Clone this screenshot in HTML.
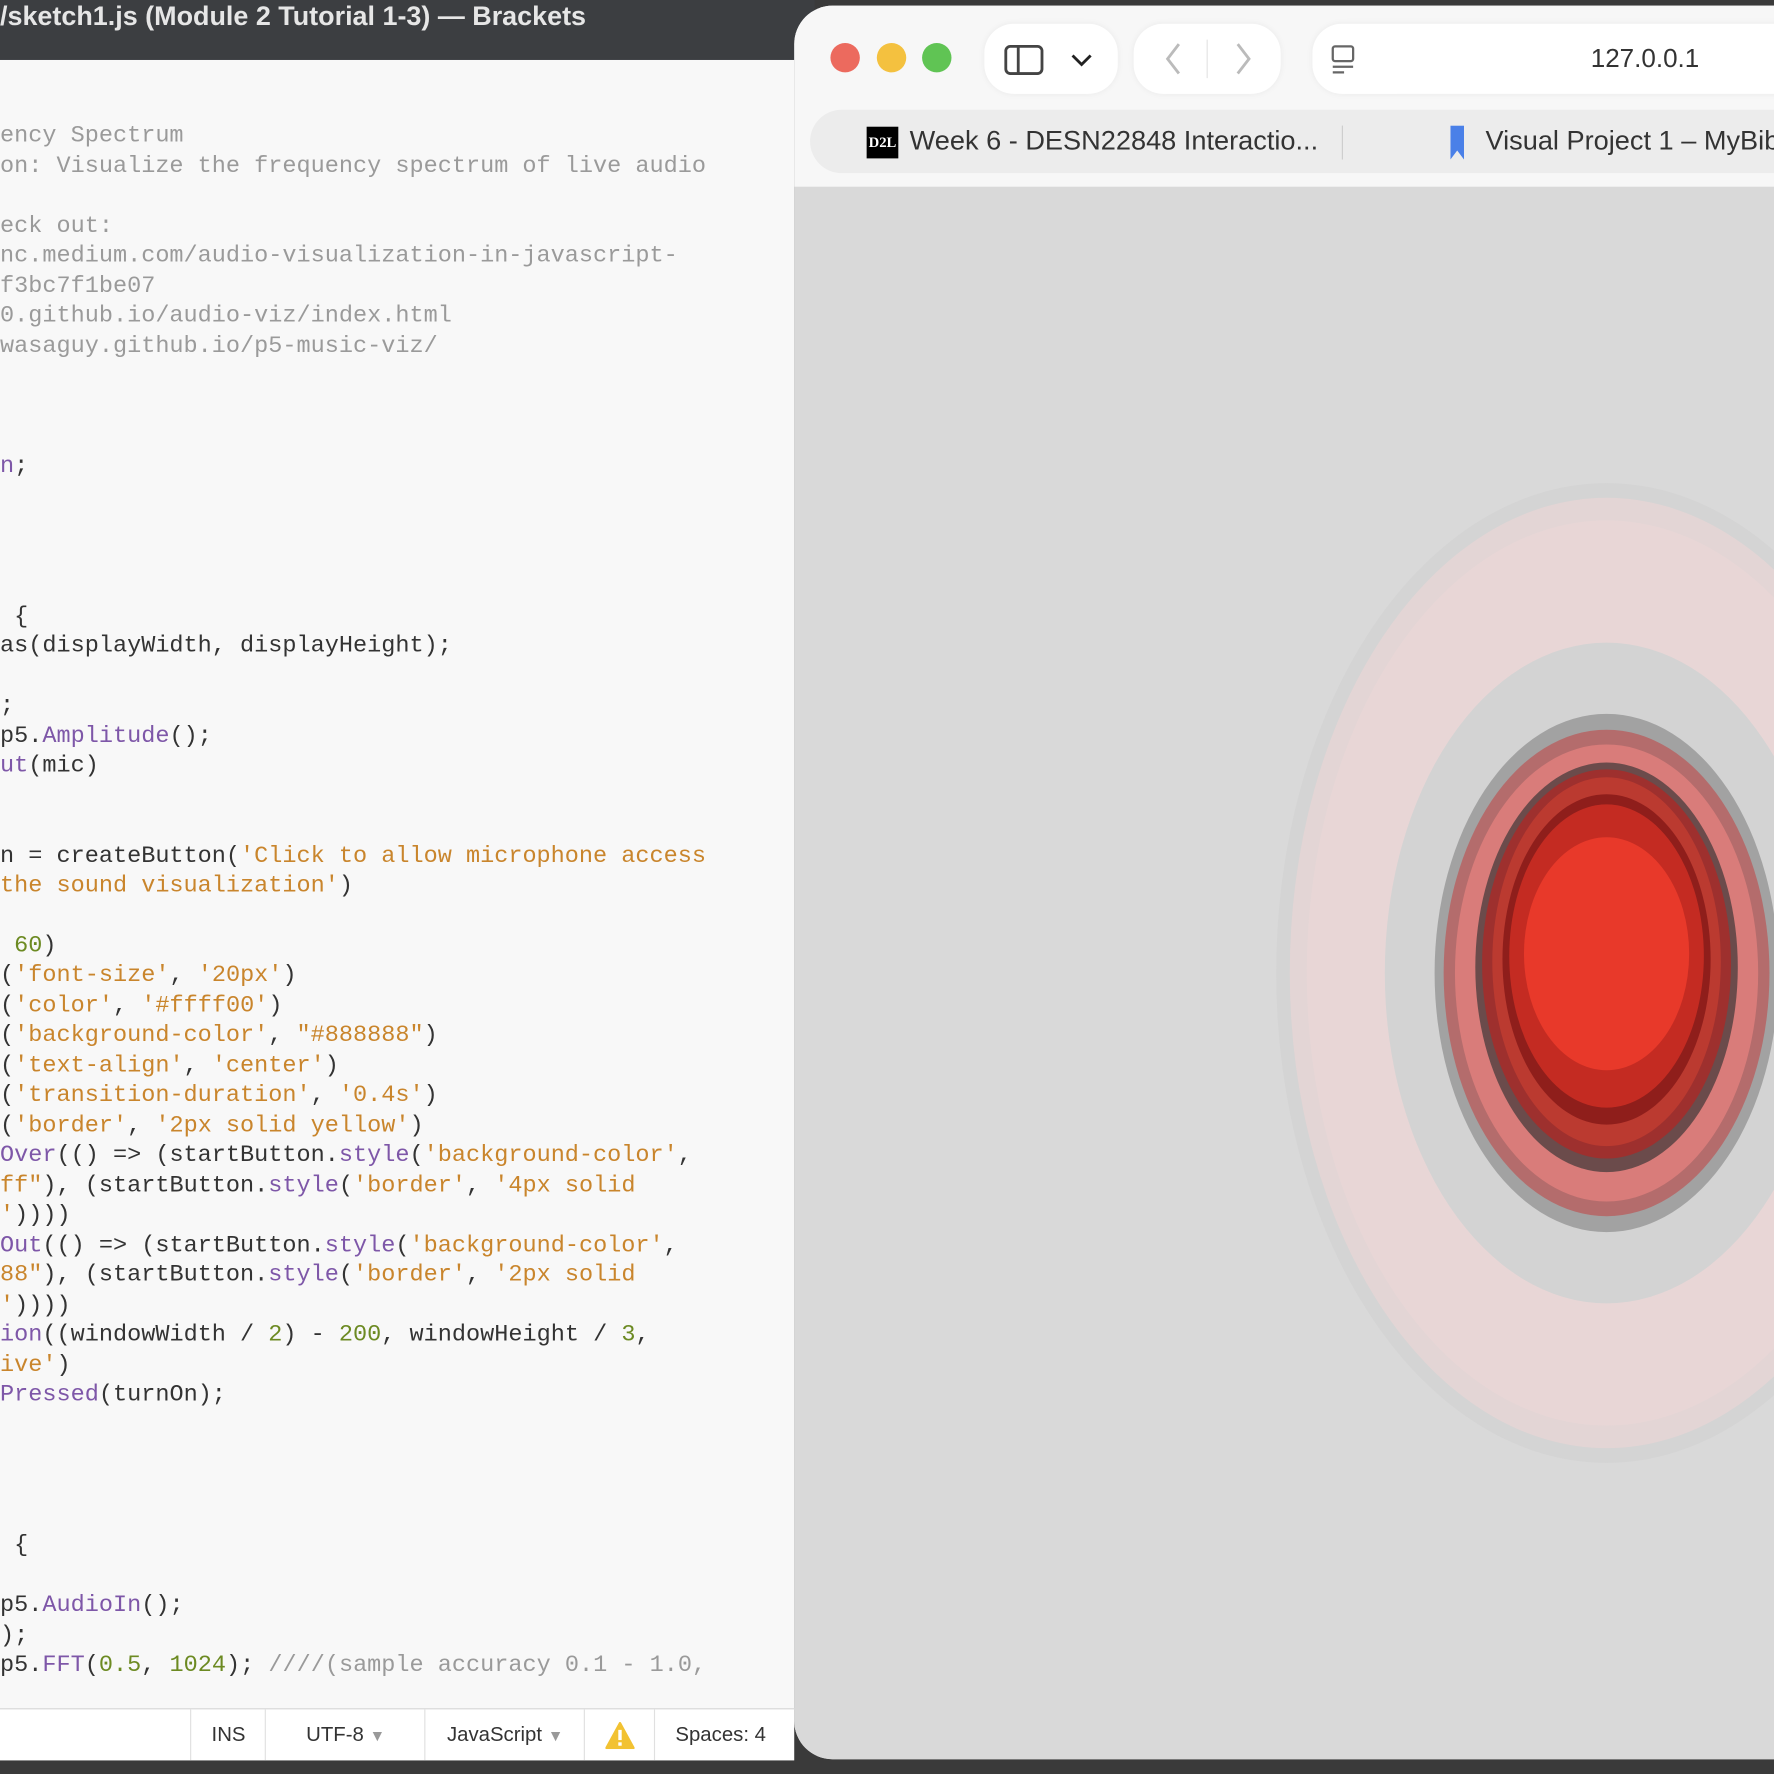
<!DOCTYPE html>
<html><head><meta charset="utf-8"><style>
html,body{margin:0;padding:0;width:1774px;height:1774px;overflow:hidden;background:#3a3a3a}
#w{position:absolute;left:0;top:0;width:1568px;height:1568px;transform:scale(1.131378);transform-origin:0 0;overflow:hidden;background:#3a3a3a}
.title{position:absolute;left:0;top:0;width:720px;height:53px;background:#3c3e41;color:#e6e6e6;font:bold 23.8px "Liberation Sans",sans-serif;line-height:30px}
.ed{position:absolute;left:0;top:53px;width:702px;height:1457px;background:#f8f8f8}
.l{position:absolute;left:0;font:20.8px/26px "Liberation Mono",monospace;color:#333;white-space:pre}
.c{color:#9a9a9a}.s{color:#c9852c}.n{color:#6c8a22}.f{color:#7e57a8}
.sb{position:absolute;left:0;top:1510px;width:702px;height:45px;background:#fff;border-top:1px solid #e2e2e2;font:18px "Liberation Sans",sans-serif;color:#333}
.sb div{position:absolute;top:0;height:45px;line-height:45px;border-left:1px solid #e0e0e0;text-align:center}
.br{position:absolute;left:702px;top:5px;width:900px;height:1550px;background:#fff;border-radius:34px 0 0 34px;overflow:hidden}
.pill{position:absolute;background:#fff;border-radius:26px;box-shadow:0 0 6px rgba(0,0,0,.06)}
</style></head><body><div id="w">
<div class="title"><span style="position:absolute;left:0;top:0">/sketch1.js (Module 2 Tutorial 1-3) — Brackets</span></div>
<div class="ed">
<div class="l c" style="top:55px">ency Spectrum</div>
<div class="l c" style="top:82px">on: Visualize the frequency spectrum of live audio</div>
<div class="l c" style="top:135px">eck out:</div>
<div class="l c" style="top:161px">nc.medium.com/audio-visualization-in-javascript-</div>
<div class="l c" style="top:188px">f3bc7f1be07</div>
<div class="l c" style="top:214px">0.github.io/audio-viz/index.html</div>
<div class="l c" style="top:241px">wasaguy.github.io/p5-music-viz/</div>
<div class="l" style="top:347px"><span class="f">n</span>;</div>
<div class="l" style="top:480px"> {</div>
<div class="l" style="top:506px">as(displayWidth, displayHeight);</div>
<div class="l" style="top:559px">;</div>
<div class="l" style="top:586px">p5.<span class="f">Amplitude</span>();</div>
<div class="l" style="top:612px"><span class="f">ut</span>(mic)</div>
<div class="l" style="top:692px">n = createButton(<span class="s">'Click to allow microphone access</span></div>
<div class="l" style="top:718px"><span class="s">the sound visualization'</span>)</div>
<div class="l" style="top:771px"> <span class="n">60</span>)</div>
<div class="l" style="top:797px">(<span class="s">'font-size'</span>, <span class="s">'20px'</span>)</div>
<div class="l" style="top:824px">(<span class="s">'color'</span>, <span class="s">'#ffff00'</span>)</div>
<div class="l" style="top:850px">(<span class="s">'background-color'</span>, <span class="s">"#888888"</span>)</div>
<div class="l" style="top:877px">(<span class="s">'text-align'</span>, <span class="s">'center'</span>)</div>
<div class="l" style="top:903px">(<span class="s">'transition-duration'</span>, <span class="s">'0.4s'</span>)</div>
<div class="l" style="top:930px">(<span class="s">'border'</span>, <span class="s">'2px solid yellow'</span>)</div>
<div class="l" style="top:956px"><span class="f">Over</span>(() =&gt; (startButton.<span class="f">style</span>(<span class="s">'background-color'</span>,</div>
<div class="l" style="top:983px"><span class="s">ff"</span>), (startButton.<span class="f">style</span>(<span class="s">'border'</span>, <span class="s">'4px solid</span></div>
<div class="l" style="top:1009px"><span class="s">'</span>))))</div>
<div class="l" style="top:1036px"><span class="f">Out</span>(() =&gt; (startButton.<span class="f">style</span>(<span class="s">'background-color'</span>,</div>
<div class="l" style="top:1062px"><span class="s">88"</span>), (startButton.<span class="f">style</span>(<span class="s">'border'</span>, <span class="s">'2px solid</span></div>
<div class="l" style="top:1089px"><span class="s">'</span>))))</div>
<div class="l" style="top:1115px"><span class="f">ion</span>((windowWidth / <span class="n">2</span>) - <span class="n">200</span>, windowHeight / <span class="n">3</span>,</div>
<div class="l" style="top:1142px"><span class="s">ive'</span>)</div>
<div class="l" style="top:1168px"><span class="f">Pressed</span>(turnOn);</div>
<div class="l" style="top:1301px"> {</div>
<div class="l" style="top:1354px">p5.<span class="f">AudioIn</span>();</div>
<div class="l" style="top:1381px">);</div>
<div class="l" style="top:1407px">p5.<span class="f">FFT</span>(<span class="n">0.5</span>, <span class="n">1024</span>); <span class="c">////(sample accuracy 0.1 - 1.0,</span></div>
</div>
<div class="sb">
<div style="left:168px;width:66px">INS</div>
<div style="left:234px;width:141px">UTF-8 <span style="color:#999;font-size:14px">▼</span></div>
<div style="left:375px;width:141px">JavaScript <span style="color:#999;font-size:14px">▼</span></div>
<div style="left:516px;width:62px"><svg width="26" height="24" viewBox="0 0 26 24" style="vertical-align:middle"><path d="M13 1 L25 23 L1 23 Z" fill="#f2c232" stroke="#f2c232" stroke-linejoin="round" stroke-width="2"/><rect x="11.5" y="7" width="3" height="9" fill="#fff"/><rect x="11.5" y="18" width="3" height="3" fill="#fff"/></svg></div>
<div style="left:578px;width:116px">Spaces: 4</div>
</div>
<div class="br">
<div style="position:absolute;left:0;top:0;width:900px;height:160px;background:#f7f7f7"></div>
<div style="position:absolute;left:32px;top:33px;width:26px;height:26px;border-radius:50%;background:#ec6a5e"></div>
<div style="position:absolute;left:73px;top:33px;width:26px;height:26px;border-radius:50%;background:#f4c13f"></div>
<div style="position:absolute;left:113px;top:33px;width:26px;height:26px;border-radius:50%;background:#60c454"></div>
<div class="pill" style="left:168px;top:16px;width:118px;height:62px">
<svg width="118" height="62"><rect x="19" y="20" width="32" height="24" rx="4" fill="none" stroke="#444" stroke-width="2.5"/><line x1="30" y1="20" x2="30" y2="44" stroke="#444" stroke-width="2.5"/><path d="M78 28 l8 8 l8 -8" fill="none" stroke="#222" stroke-width="2.5"/></svg></div>
<div class="pill" style="left:300px;top:16px;width:130px;height:62px">
<svg width="130" height="62"><path d="M40 18 l-10 13 l10 13" fill="none" stroke="#bbb" stroke-width="2.5"/><line x1="65" y1="14" x2="65" y2="48" stroke="#e2e2e2"/><path d="M92 18 l10 13 l-10 13" fill="none" stroke="#bbb" stroke-width="2.5"/></svg></div>
<div class="pill" style="left:458px;top:16px;width:460px;height:62px">
<svg width="60" height="62"><rect x="18" y="20" width="18" height="13" rx="2" fill="none" stroke="#666" stroke-width="2"/><line x1="18" y1="38" x2="36" y2="38" stroke="#666" stroke-width="2"/><line x1="18" y1="43" x2="28" y2="43" stroke="#666" stroke-width="2"/></svg>
<span style="position:absolute;left:246px;top:17px;font:23px 'Liberation Sans',sans-serif;color:#333">127.0.0.1</span></div>
<div style="position:absolute;left:14px;top:92px;width:900px;height:56px;background:#ececec;border-radius:28px"></div>
<div style="position:absolute;left:64px;top:107px;width:28px;height:28px;background:#000;color:#fff;font:bold 13px 'Liberation Serif',serif;line-height:28px;text-align:center">D2L</div>
<div style="position:absolute;left:102px;top:106px;font:24px 'Liberation Sans',sans-serif;color:#333">Week 6 - DESN22848 Interactio...</div>
<div style="position:absolute;left:484px;top:106px;width:1px;height:30px;background:#ccc"></div>
<svg style="position:absolute;left:580px;top:106px" width="14" height="30"><path d="M0 0 H12 V30 L6 22 L0 30 Z" fill="#4a80e8"/></svg>
<div style="position:absolute;left:611px;top:106px;font:24px 'Liberation Sans',sans-serif;color:#333">Visual Project 1 – MyBib</div>
<div style="position:absolute;left:0;top:160px;width:900px;height:1400px;background:#d9d9d9">
<svg width="900" height="1400" style="position:absolute;left:0;top:0">
<g transform="translate(718,695)">
<ellipse cx="0" cy="0" rx="292" ry="433" fill="#d4d4d4"/>
<ellipse cx="0" cy="0" rx="280" ry="420" fill="#e3d5d5"/>
<ellipse cx="0" cy="0" rx="265" ry="400" fill="#e8d6d6"/>
<ellipse cx="0" cy="0" rx="196" ry="292" fill="#d3d3d3"/>
<ellipse cx="0" cy="0" rx="152" ry="229" fill="#a2a2a2"/>
<ellipse cx="0" cy="0" rx="144" ry="215" fill="#b46c6c"/>
<ellipse cx="0" cy="0" rx="134" ry="202" fill="#d97c7a"/>
<ellipse cx="0" cy="-5" rx="116" ry="181" fill="#6b4b4b"/>
<ellipse cx="0" cy="-8" rx="110" ry="172" fill="#9e302e"/>
<ellipse cx="0" cy="-10" rx="101" ry="163" fill="#bb3a30"/>
<ellipse cx="0" cy="-12" rx="92" ry="146" fill="#8f1e1b"/>
<ellipse cx="0" cy="-15" rx="86" ry="134" fill="#c42b22"/>
<ellipse cx="0" cy="-17" rx="73" ry="103" fill="#e8392a"/>
</g></svg></div>
</div>
</div></body></html>
